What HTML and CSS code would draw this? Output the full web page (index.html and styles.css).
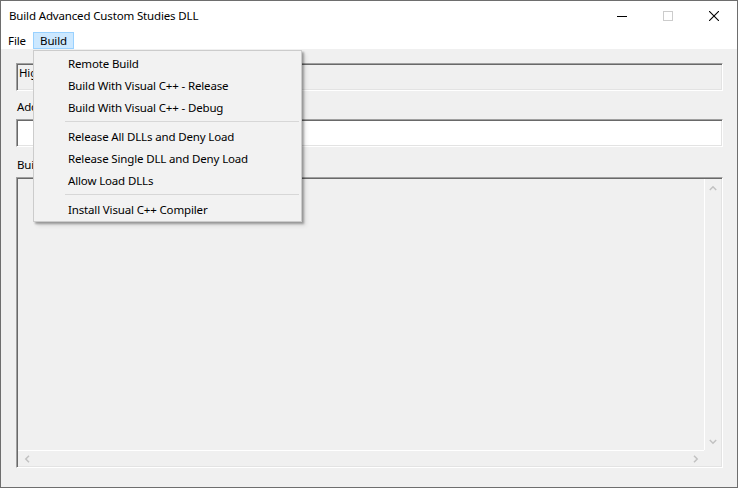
FILE: index.html
```
<!DOCTYPE html>
<html>
<head>
<meta charset="utf-8">
<link rel="stylesheet" href="styles.css">
</head>
<body>
<div class="window">
  <div class="titlebar">
    <span class="title">Build Advanced Custom Studies DLL</span>
    <div class="caption-btns">
      <span class="cbtn"><svg width="10" height="10" viewBox="0 0 10 10"><line x1="0" y1="5.5" x2="10" y2="5.5" stroke="#000" stroke-width="1"/></svg></span>
      <span class="cbtn"><svg width="10" height="10" viewBox="0 0 10 10"><rect x="0.5" y="0.5" width="9" height="9" fill="none" stroke="#cccccc" stroke-width="1"/></svg></span>
      <span class="cbtn"><svg width="10" height="10" viewBox="0 0 10 10"><path d="M0 0 L10 10 M10 0 L0 10" stroke="#000" stroke-width="1.1" fill="none"/></svg></span>
    </div>
  </div>
  <div class="menubar">
    <span class="mitem">File</span>
    <span class="mitem active">Build</span>
  </div>
  <div class="client">
    <div class="edit readonly">High Performance</div>
    <div class="label">Additional</div>
    <div class="edit white"></div>
    <div class="label">Build Output</div>
    <div class="outbox">
      <div class="content"></div>
      <div class="vscroll">
        <span class="arrow"><svg width="8" height="6" viewBox="0 0 8 6"><polyline points="0.8,5 4,1.8 7.2,5" fill="none" stroke="#c2c2c2" stroke-width="1.5"/></svg></span>
        <span class="arrow"><svg width="8" height="6" viewBox="0 0 8 6"><polyline points="0.8,1 4,4.2 7.2,1" fill="none" stroke="#c2c2c2" stroke-width="1.5"/></svg></span>
      </div>
      <div class="hscroll">
        <span class="arrow"><svg width="6" height="8" viewBox="0 0 6 8"><polyline points="5,0.8 1.8,4 5,7.2" fill="none" stroke="#c2c2c2" stroke-width="1.5"/></svg></span>
        <span class="arrow"><svg width="6" height="8" viewBox="0 0 6 8"><polyline points="1,0.8 4.2,4 1,7.2" fill="none" stroke="#c2c2c2" stroke-width="1.5"/></svg></span>
      </div>
      <div class="corner"></div>
    </div>
  </div>
  <div class="dropdown">
    <div class="ditem">Remote Build</div>
    <div class="ditem">Build With Visual C++ - Release</div>
    <div class="ditem">Build With Visual C++ - Debug</div>
    <div class="sep"></div>
    <div class="ditem">Release All DLLs and Deny Load</div>
    <div class="ditem">Release Single DLL and Deny Load</div>
    <div class="ditem">Allow Load DLLs</div>
    <div class="sep"></div>
    <div class="ditem">Install Visual C++ Compiler</div>
  </div>
</div>
</body>
</html>
```
FILE: styles.css
```
* { box-sizing: border-box; }
html, body { margin: 0; padding: 0; background: #fff; }
body {
  font-family: "Noto Sans", "Open Sans", sans-serif;
  font-size: 11.5px;
  letter-spacing: -0.15px;
  color: #000;
}
.window {
  position: relative;
  width: 738px;
  height: 488px;
  border: 1px solid #6e6e6e;
  display: flex;
  flex-direction: column;
  background: #f0f0f0;
  overflow: hidden;
}
.titlebar {
  height: 29px;
  background: #fff;
  display: flex;
  align-items: center;
  justify-content: space-between;
  padding-left: 8px;
}
.title { line-height: 16px; }
.caption-btns { display: flex; height: 29px; }
.cbtn {
  width: 46px;
  height: 29px;
  display: flex;
  align-items: center;
  justify-content: center;
}
.cbtn svg { display: block; }
.menubar {
  height: 19px;
  background: #fff;
  display: flex;
  padding-top: 2px;
}
.mitem {
  height: 17px;
  line-height: 15px;
  border: 1px solid transparent;
  display: flex;
  align-items: center;
  justify-content: center;
}
.mitem:first-child { width: 32px; }
.mitem.active {
  width: 41px;
  background: #cce8ff;
  border-color: #99d1ff;
}
.client {
  flex: 1;
  display: flex;
  flex-direction: column;
  padding: 14px 14px 19px 15px;
}
.edit {
  height: 28px;
  border: 1px solid;
  border-color: #a0a0a0 #ffffff #ffffff #a0a0a0;
  box-shadow: inset 1px 1px 0 #696969, inset -1px -1px 0 #e3e3e3;
  padding: 1px 2px 0 2px;
  line-height: 16px;
  white-space: nowrap;
  overflow: hidden;
}
.edit.readonly { background: #f0f0f0; }
.edit.white { background: #fff; }
.label {
  height: 28px;
  padding: 8px 0 0 1px;
  line-height: 16px;
}
.label + .edit.white + .label { height: 30px; padding-top: 10px; }
.outbox {
  height: 291px;
  border: 1px solid;
  border-color: #a0a0a0 #ffffff #ffffff #a0a0a0;
  box-shadow: inset 1px 1px 0 #696969, inset -1px -1px 0 #e3e3e3;
  padding: 1px;
  display: grid;
  grid-template-columns: 1fr 17px;
  grid-template-rows: 1fr 16px;
  background: #f0f0f0;
}
.vscroll {
  border-left: 1px solid #fff;
  display: flex;
  flex-direction: column;
  justify-content: space-between;
}
.vscroll .arrow {
  height: 17px;
  display: flex;
  align-items: center;
  justify-content: center;
}
.hscroll {
  border-top: 1px solid #fff;
  display: flex;
  justify-content: space-between;
}
.hscroll .arrow {
  width: 17px;
  display: flex;
  align-items: center;
  justify-content: center;
}
.arrow svg { display: block; }
.dropdown {
  position: absolute;
  left: 32px;
  top: 49px;
  width: 269px;
  background: #f2f2f2;
  border: 1px solid #cccccc;
  padding: 1px 2px;
  box-shadow: 2px 2px 2px rgba(0,0,0,0.32), 4px 4px 4px rgba(0,0,0,0.08);
}
.ditem {
  height: 22px;
  line-height: 22px;
  padding: 1px 0 0 32px;
  white-space: nowrap;
}
.ditem { line-height: 21px; }
.sep {
  height: 7px;
  margin-left: 29px;
  padding-top: 3px;
}
.sep::before {
  content: "";
  display: block;
  height: 1px;
  background: #d7d7d7;
}
```
